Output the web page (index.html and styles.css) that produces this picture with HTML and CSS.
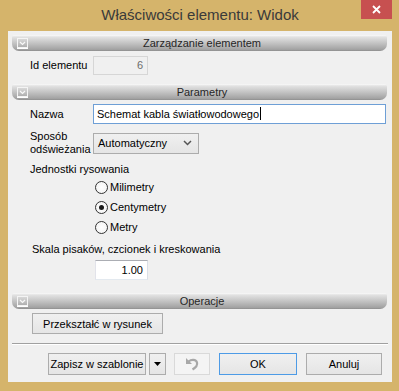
FILE: index.html
```html
<!DOCTYPE html>
<html lang="pl">
<head>
    <meta charset="UTF-8">
    <title>Właściwości elementu: Widok</title>
    <link rel="stylesheet" href="styles.css">
</head>
<body>
    <div class="window">
        <div class="titlebar">
            <div class="title">Właściwości elementu: Widok</div>
            <div class="close">
                <svg width="9" height="9" viewBox="0 0 9 9"><path d="M1 1 L8 8 M8 1 L1 8" stroke="#fff" stroke-width="1.8" fill="none"/></svg>
            </div>
        </div>
        <div class="client">
            <div class="bar">
                <svg class="bar-icon" width="11" height="11" viewBox="0 0 11 11"><rect x="0.5" y="0.5" width="10" height="9" fill="none" stroke="#f4f4f4"/><path d="M3 4 L5.5 6.5 L8 4" stroke="#f8f8f8" stroke-width="1.2" fill="none"/><path d="M0 10.5 H11" stroke="#fff"/></svg>
                <span class="bar-text">Zarządzanie elementem</span>
            </div>
            <div class="row row-id">
                <label class="lbl">Id elementu</label>
                <div class="field field-disabled field-id">6</div>
            </div>

            <div class="bar bar-params">
                <svg class="bar-icon" width="11" height="11" viewBox="0 0 11 11"><rect x="0.5" y="0.5" width="10" height="9" fill="none" stroke="#f4f4f4"/><path d="M3 4 L5.5 6.5 L8 4" stroke="#f8f8f8" stroke-width="1.2" fill="none"/><path d="M0 10.5 H11" stroke="#fff"/></svg>
                <span class="bar-text">Parametry</span>
            </div>
            <div class="row row-name">
                <label class="lbl">Nazwa</label>
                <div class="field field-focus field-name">Schemat kabla światłowodowego<span class="caret"></span></div>
            </div>
            <div class="row row-refresh">
                <label class="lbl">Sposób<br>odświeżania</label>
                <div class="combo">
                    <span>Automatyczny</span>
                    <svg width="9" height="6" viewBox="0 0 9 6"><path d="M1 1 L4.5 4.5 L8 1" stroke="#555" stroke-width="1.5" fill="none"/></svg>
                </div>
            </div>
            <div class="group-label">Jednostki rysowania</div>
            <div class="radios">
                <div class="radio"><span class="circle"></span>Milimetry</div>
                <div class="radio"><span class="circle checked"></span>Centymetry</div>
                <div class="radio"><span class="circle"></span>Metry</div>
            </div>
            <div class="group-label scale-label">Skala pisaków, czcionek i kreskowania</div>
            <div class="field field-scale">1.00</div>

            <div class="bar bar-ops">
                <svg class="bar-icon" width="11" height="11" viewBox="0 0 11 11"><rect x="0.5" y="0.5" width="10" height="9" fill="none" stroke="#f4f4f4"/><path d="M3 4 L5.5 6.5 L8 4" stroke="#f8f8f8" stroke-width="1.2" fill="none"/><path d="M0 10.5 H11" stroke="#fff"/></svg>
                <span class="bar-text">Operacje</span>
            </div>
            <div class="ops">
                <button class="btn btn-convert">Przekształć w rysunek</button>
            </div>

            <div class="separator"></div>

            <div class="footer">
                <button class="btn btn-save">Zapisz w szablonie</button>
                <button class="btn btn-drop">
                    <svg width="7" height="4" viewBox="0 0 7 4"><path d="M0 0 H7 L3.5 4 Z" fill="#000"/></svg>
                </button>
                <button class="btn btn-undo" disabled>
                    <svg width="16" height="14" viewBox="0 0 16 14"><path d="M2 1 L2 7 L8 7 Z" fill="#a8a8a8"/><path d="M4.5 4.5 C7 2.5 12 2 13 5.5 C13.8 8.5 11 11 8.5 12.5" stroke="#a8a8a8" stroke-width="2.2" fill="none"/></svg>
                </button>
                <button class="btn btn-ok">OK</button>
                <button class="btn btn-cancel">Anuluj</button>
            </div>
        </div>
    </div>
</body>
</html>
```

FILE: styles.css
```css
body {
    margin: 0;
    font-family: "Liberation Sans", Arial, sans-serif;
    font-size: 11px;
    color: #000;
}

.window {
    width: 399px;
    height: 391px;
    box-sizing: border-box;
    background-color: #d5b46b;
    padding: 0 7px 9px 8px;
    display: flex;
    flex-direction: column;
}

.titlebar {
    height: 31px;
    display: grid;
    grid-template-columns: 31px 1fr 31px;
    align-items: start;
}

.title {
    grid-column: 2;
    text-align: center;
    font-size: 15px;
    line-height: 30px;
    color: #3a3a3a;
}

.close {
    grid-column: 3;
    height: 19px;
    background-color: #c75050;
    display: flex;
    align-items: center;
    justify-content: center;
}

.client {
    flex: 1;
    background-color: #f0f0f0;
    display: flex;
    flex-direction: column;
}

/* section headers */
.bar {
    margin: 4px 5px 0 4px;
    height: 16px;
    box-sizing: border-box;
    border-radius: 3px 3px 7px 7px;
    background: linear-gradient(#fbfbfb 0, #e2e2e2 12%, #c4c4c4 50%, #a3a3a3 90%, #8e8e8e 100%);
    display: grid;
    grid-template-columns: 20px 1fr 20px;
    align-items: center;
    padding-left: 5px;
}

.bar-icon {
    display: block;
}

.bar-text {
    text-align: center;
    color: #262626;
    font-size: 11px;
}

.bar-params {
    margin-top: 9px;
}

.bar-ops {
    margin-top: 13px;
}

/* rows */
.row {
    display: flex;
    align-items: center;
    padding-left: 22px;
}

.lbl {
    width: 63px;
    line-height: 13px;
}

.row-id {
    margin-top: 5px;
}

.row-name {
    margin-top: 4px;
}

.row-refresh {
    margin-top: 6px;
    height: 26px;
}

.field {
    height: 19px;
    box-sizing: border-box;
    border: 1px solid #abadb3;
    border-color: #abadb3 #dbdfe6 #e3e9ef #e2e3ea;
    background-color: #fff;
    line-height: 17px;
    padding: 0 4px;
}

.field-disabled {
    background-color: #f0f0f0;
    border-color: #d6d6d6;
    color: #6d6d6d;
}

.field-id {
    width: 55px;
    text-align: right;
}

.field-focus {
    border-color: #6e9fd6;
}

.field-name {
    width: 293px;
    height: 20px;
    line-height: 18px;
    padding-left: 3px;
}

.caret {
    display: inline-block;
    width: 1px;
    height: 13px;
    background-color: #000;
    vertical-align: -2px;
    margin-left: 1px;
}

.combo {
    width: 106px;
    height: 21px;
    box-sizing: border-box;
    border: 1px solid #acacac;
    background: linear-gradient(#f0f0f0, #e5e5e5);
    display: flex;
    align-items: center;
    justify-content: space-between;
    padding: 0 6px 0 4px;
}

.group-label {
    margin-top: 6px;
    padding-left: 22px;
    line-height: 14px;
}

.radios {
    display: flex;
    flex-direction: column;
    padding-left: 87px;
    margin-top: 1px;
}

.radio {
    height: 20px;
    display: flex;
    align-items: center;
}

.circle {
    width: 13px;
    height: 13px;
    box-sizing: border-box;
    border: 1px solid #333;
    border-radius: 50%;
    background: radial-gradient(#fff, #f0f0f0);
    margin-right: 2px;
    display: flex;
    align-items: center;
    justify-content: center;
}

.circle.checked::after {
    content: '';
    width: 5px;
    height: 5px;
    border-radius: 50%;
    background-color: #1a1a1a;
}

.scale-label {
    margin-top: 5px;
    padding-left: 24px;
}

.field-scale {
    margin: 4px 0 0 87px;
    width: 53px;
    height: 20px;
    line-height: 18px;
    text-align: right;
}

/* buttons */
.btn {
    font-family: "Liberation Sans", Arial, sans-serif;
    font-size: 11px;
    color: #000;
    height: 22px;
    box-sizing: border-box;
    border: 1px solid #acacac;
    background: linear-gradient(#f0f0f0, #e5e5e5);
    padding: 0;
    display: flex;
    align-items: center;
    justify-content: center;
}

.ops {
    display: flex;
    padding-left: 24px;
    margin-top: 4px;
}

.btn-convert {
    width: 131px;
    height: 21px;
}

.separator {
    margin: 9px 4px 0 4px;
    height: 1px;
    background-color: #a0a0a0;
    border-bottom: 1px solid #fff;
}

.footer {
    display: flex;
    margin-top: 8px;
    padding-left: 40px;
}

.btn-save {
    width: 98px;
}

.btn-drop {
    width: 17px;
    margin-left: 3px;
}

.btn-undo {
    width: 36px;
    margin-left: 8px;
    border-color: #d9d9d9;
    background: #f4f4f4;
}

.btn-ok {
    width: 78px;
    margin-left: 9px;
    border-color: #3c7fb1;
    border-color: #4d9be6;
}

.btn-cancel {
    width: 76px;
    margin-left: 9px;
}
```
